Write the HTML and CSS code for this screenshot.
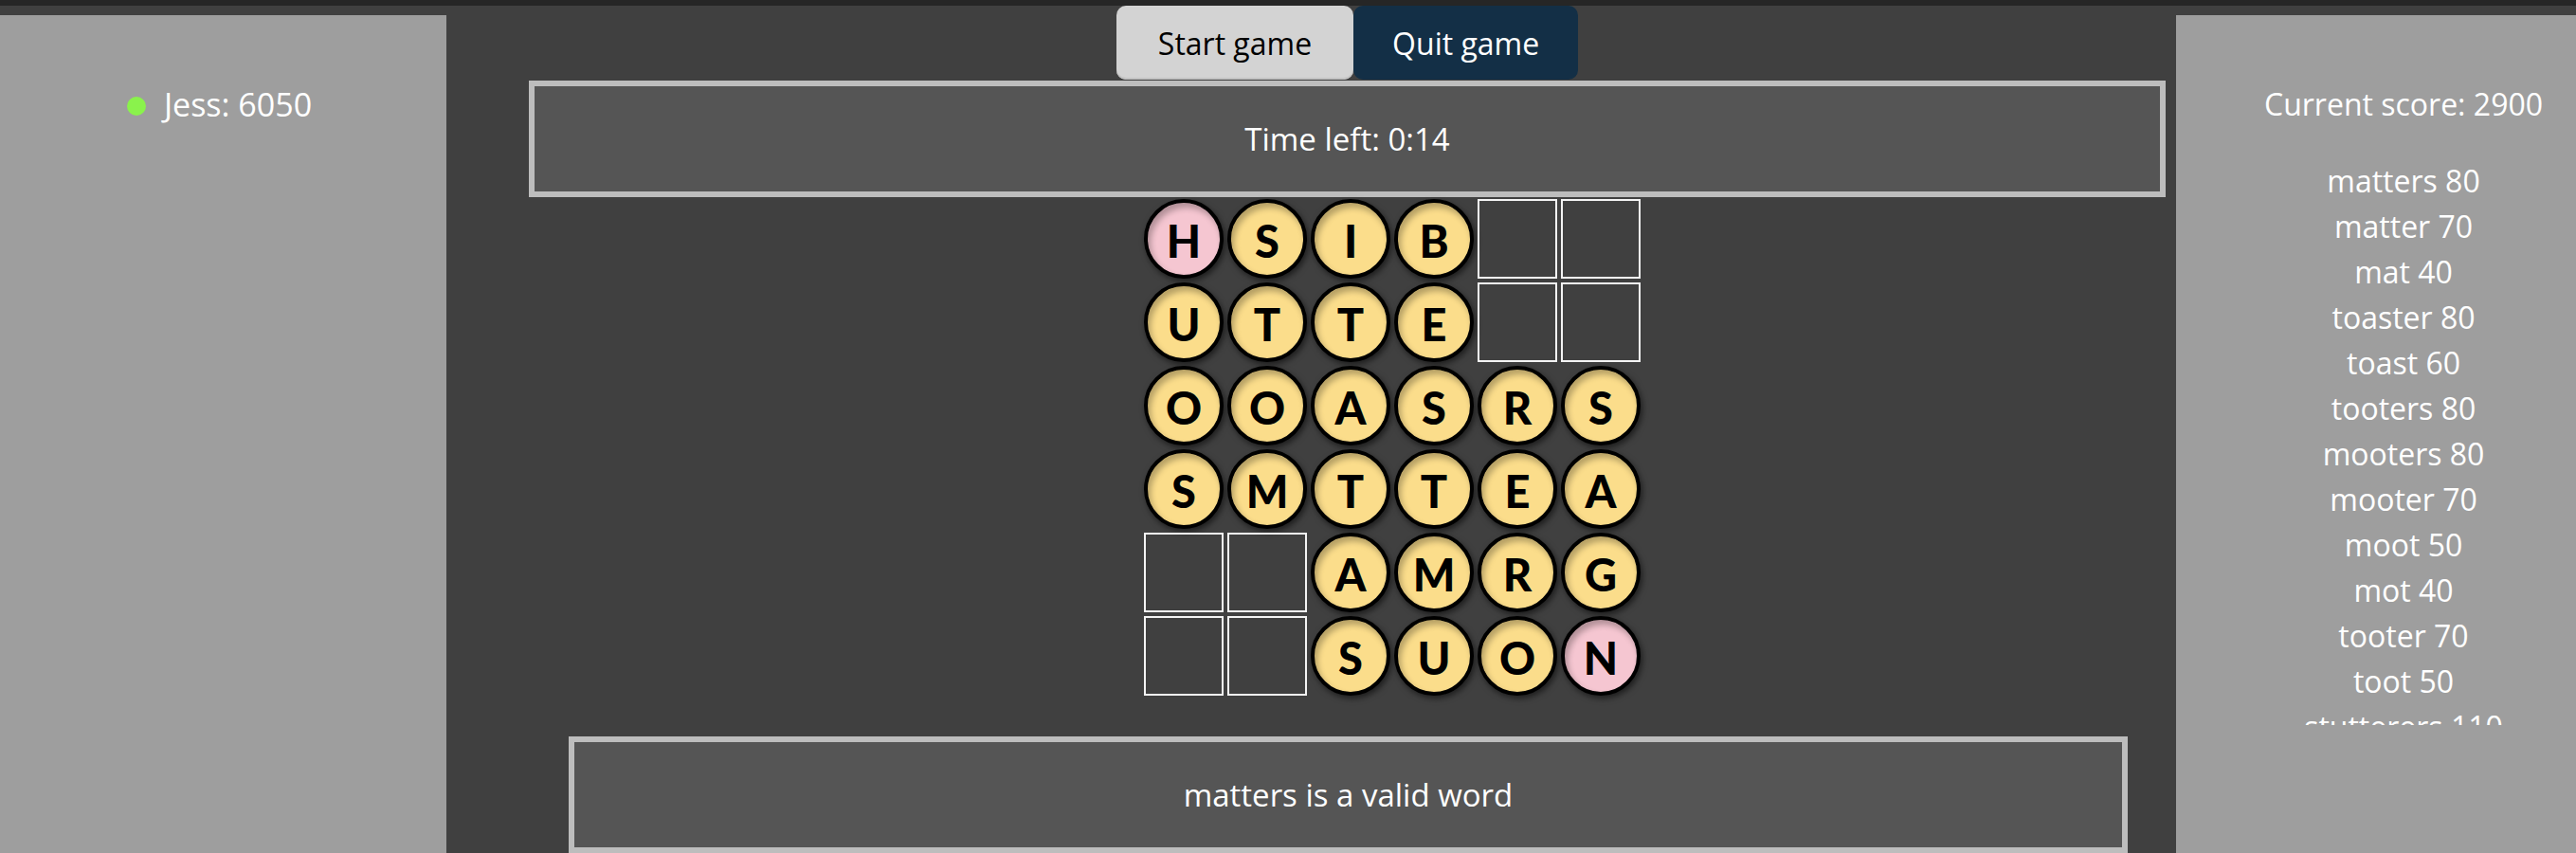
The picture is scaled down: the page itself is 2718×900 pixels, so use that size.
FILE: index.html
```html
<!DOCTYPE html>
<html lang="en">
<head>
<meta charset="utf-8">
<title>Word Game</title>
<link rel="stylesheet" href="styles.css">
</head>
<body>
<div class="topbar"></div>
<div class="app">
  <aside class="panel left">
    <div class="player"><span class="dot"></span><span class="player-name">Jess: 6050</span></div>
  </aside>
  <main class="center">
    <div class="buttons">
      <button class="btn start">Start game</button>
      <button class="btn quit">Quit game</button>
    </div>
    <div class="timer">Time left: 0:14</div>
    <div class="grid">
      <div class="cell tile pink">H</div>
      <div class="cell tile">S</div>
      <div class="cell tile">I</div>
      <div class="cell tile">B</div>
      <div class="cell empty"></div>
      <div class="cell empty"></div>

      <div class="cell tile">U</div>
      <div class="cell tile">T</div>
      <div class="cell tile">T</div>
      <div class="cell tile">E</div>
      <div class="cell empty"></div>
      <div class="cell empty"></div>

      <div class="cell tile">O</div>
      <div class="cell tile">O</div>
      <div class="cell tile">A</div>
      <div class="cell tile">S</div>
      <div class="cell tile">R</div>
      <div class="cell tile">S</div>

      <div class="cell tile">S</div>
      <div class="cell tile">M</div>
      <div class="cell tile">T</div>
      <div class="cell tile">T</div>
      <div class="cell tile">E</div>
      <div class="cell tile">A</div>

      <div class="cell empty"></div>
      <div class="cell empty"></div>
      <div class="cell tile">A</div>
      <div class="cell tile">M</div>
      <div class="cell tile">R</div>
      <div class="cell tile">G</div>

      <div class="cell empty"></div>
      <div class="cell empty"></div>
      <div class="cell tile">S</div>
      <div class="cell tile">U</div>
      <div class="cell tile">O</div>
      <div class="cell tile pink">N</div>
    </div>
    <div class="message">matters is a valid word</div>
  </main>
  <aside class="panel right">
    <div class="score">Current score: 2900</div>
    <ul class="words">
      <li>matters 80</li>
      <li>matter 70</li>
      <li>mat 40</li>
      <li>toaster 80</li>
      <li>toast 60</li>
      <li>tooters 80</li>
      <li>mooters 80</li>
      <li>mooter 70</li>
      <li>moot 50</li>
      <li>mot 40</li>
      <li>tooter 70</li>
      <li>toot 50</li>
      <li>stutterers 110</li>
    </ul>
  </aside>
</div>
</body>
</html>
```

FILE: styles.css
```css
html, body {
  margin: 0;
  padding: 0;
  height: 900px;
  overflow: hidden;
  background: #404040;
  font-family: "Open Sans", "Noto Sans", sans-serif;
  color: #fff;
}

.topbar {
  height: 6px;
  background: #262626;
}

.app {
  display: flex;
  align-items: flex-start;
  width: 2776px;
}

.panel {
  flex: none;
  background: #9e9e9e;
  margin-top: 10px;
  height: 900px;
  box-sizing: border-box;
  padding-top: 70px;
}

.left {
  width: 471px;
}

.center {
  flex: none;
  width: 1825px;
}

.right {
  width: 480px;
  text-align: center;
}

.player {
  display: flex;
  justify-content: center;
  align-items: center;
  gap: 19px;
  font-size: 34px;
  line-height: 48px;
  padding-right: 8px;
}

.dot {
  width: 20px;
  height: 20px;
  border-radius: 50%;
  background: #8af24c;
  margin-top: 4px;
}

.buttons {
  display: flex;
  justify-content: center;
  margin-left: 87px;
  width: 1727px;
}

.btn {
  height: 78px;
  border: none;
  border-radius: 10px;
  font-family: "Open Sans", sans-serif;
  font-size: 32px;
  padding: 0 44px;
  cursor: pointer;
}

.start {
  background: #d3d3d3;
  color: #000;
  box-shadow: inset 0 -2px 0 #c2c2c2;
}

.quit {
  background: #132f46;
  color: #fff;
  padding: 0 41px;
}

.timer, .message {
  box-sizing: border-box;
  height: 123px;
  background: #555555;
  border: 6px solid #bdbdbd;
  display: flex;
  align-items: center;
  justify-content: center;
  font-size: 33px;
}

.timer {
  margin-top: 1px;
  margin-left: 87px;
  width: 1727px;
}

.grid {
  display: grid;
  grid-template-columns: repeat(6, 84px);
  grid-auto-rows: 84px;
  gap: 4px;
  margin-top: 2px;
  margin-left: 736px;
  width: max-content;
}

.cell {
  box-sizing: border-box;
  width: 84px;
  height: 84px;
}

.tile {
  border: 4px solid #000;
  border-radius: 50%;
  background: #fbdd8b;
  display: flex;
  align-items: center;
  justify-content: center;
  padding-top: 4px;
  font-family: "Lato", sans-serif;
  font-weight: 900;
  font-size: 47px;
  color: #000;
  box-shadow: inset 3px 5px 6px rgba(0, 0, 0, 0.28), 2px 3px 6px rgba(0, 0, 0, 0.55);
}

.tile.pink {
  background: #f5c6d1;
}

.empty {
  border: 2px solid #f4f4f4;
}

.message {
  margin-top: 43px;
  margin-left: 129px;
  width: 1645px;
}

.score {
  font-size: 32px;
  line-height: 48px;
}

.words {
  list-style: none;
  margin: 33px 0 0;
  padding: 0;
  height: 598px;
  overflow: hidden;
  font-size: 32px;
  line-height: 48px;
}
```
